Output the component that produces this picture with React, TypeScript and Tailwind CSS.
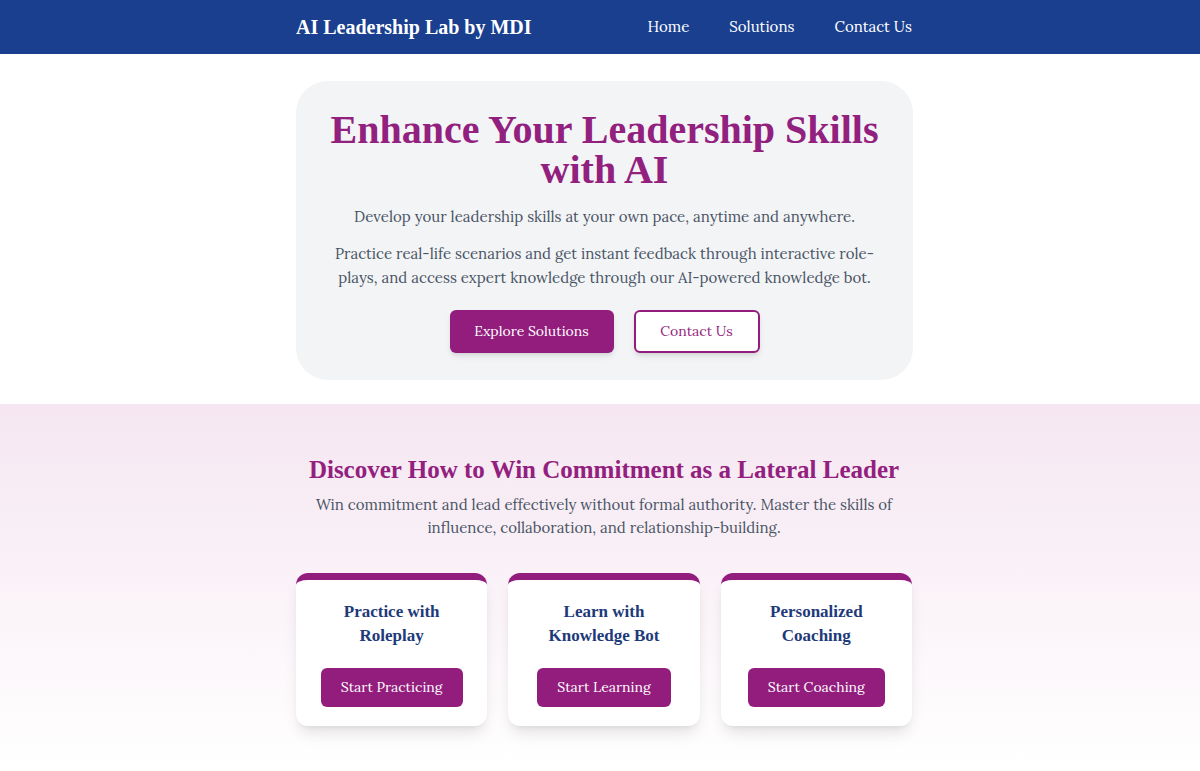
const serif = "font-['Lora','Liberation_Serif',serif]";
const wrap = "ml-[calc(50%-304px)]";

function NavBar() {
  return (
    <header className="bg-[#1a3f8f] shadow-md">
      <div className={`${wrap} flex h-[54px] w-[616px] items-center justify-between`}>
        <span className="font-['Liberation_Serif',serif] text-[20px] font-bold text-white">
          AI Leadership Lab by MDI
        </span>
        <nav className={`flex gap-10 text-[15px] text-white ${serif}`}>
          <a href="#">Home</a>
          <a href="#">Solutions</a>
          <a href="#">Contact Us</a>
        </nav>
      </div>
    </header>
  );
}

function Hero() {
  return (
    <section className="bg-white pb-6 pt-[27px]">
      <div
        className={`${wrap} flex w-[617px] flex-col items-center rounded-[32px] bg-gray-100 px-8 pb-[27px] pt-[29px] text-center`}
      >
        <h1 className="font-['Liberation_Serif',serif] text-[40px] font-bold leading-[40px] text-[#92207e]">
          Enhance Your Leadership Skills
          <br />
          with AI
        </h1>
        <p className={`mt-[15px] text-[15px] leading-6 text-gray-600 ${serif}`}>
          Develop your leadership skills at your own pace, anytime and anywhere.
        </p>
        <p className={`mt-[13px] text-[15px] leading-6 text-gray-600 ${serif}`}>
          Practice real-life scenarios and get instant feedback through interactive role-plays, and
          access expert knowledge through our AI-powered knowledge bot.
        </p>
        <div className={`mt-[20px] flex gap-5 ${serif}`}>
          <button className="h-[43px] w-[164px] rounded-md bg-[#931d7d] text-[14px] text-white shadow-md">
            Explore Solutions
          </button>
          <button className="h-[43px] w-[126px] rounded-md border-2 border-[#931d7d] bg-white text-[14px] text-[#931d7d] shadow-md">
            Contact Us
          </button>
        </div>
      </div>
    </section>
  );
}

const cards = [
  { title: ["Practice with", "Roleplay"], action: "Start Practicing" },
  { title: ["Learn with", "Knowledge Bot"], action: "Start Learning" },
  { title: ["Personalized", "Coaching"], action: "Start Coaching" },
];

function Solutions() {
  return (
    <section className="bg-gradient-to-b from-[#f5e6f1] to-white pb-10 pt-[50px]">
      <div className={`${wrap} w-[616px] text-center`}>
        <h2 className="font-['Liberation_Serif',serif] text-[25px] font-bold leading-8 text-[#92207e]">
          Discover How to Win Commitment as a Lateral Leader
        </h2>
        <p className={`mx-auto mt-[7px] w-[600px] text-[15px] leading-[23px] text-gray-600 ${serif}`}>
          Win commitment and lead effectively without formal authority. Master the skills of
          influence, collaboration, and relationship-building.
        </p>
        <div className="mt-[34px] grid grid-cols-3 gap-[21px]">
          {cards.map((c) => (
            <div
              key={c.action}
              className="flex h-[153px] flex-col items-center overflow-hidden rounded-xl border-t-[7px] border-[#931d7d] bg-white shadow-lg"
            >
              <h3 className="mt-[20px] font-['Liberation_Serif',serif] text-[17px] font-bold leading-6 text-[#1e3a7a]">
                {c.title[0]}
                <br />
                {c.title[1]}
              </h3>
              <button
                className={`mt-[20px] h-[39px] rounded-md bg-[#931d7d] px-5 text-[14px] text-white ${serif}`}
              >
                {c.action}
              </button>
            </div>
          ))}
        </div>
      </div>
    </section>
  );
}

export default function App() {
  return (
    <div className="min-h-screen bg-white">
      <NavBar />
      <Hero />
      <Solutions />
    </div>
  );
}
